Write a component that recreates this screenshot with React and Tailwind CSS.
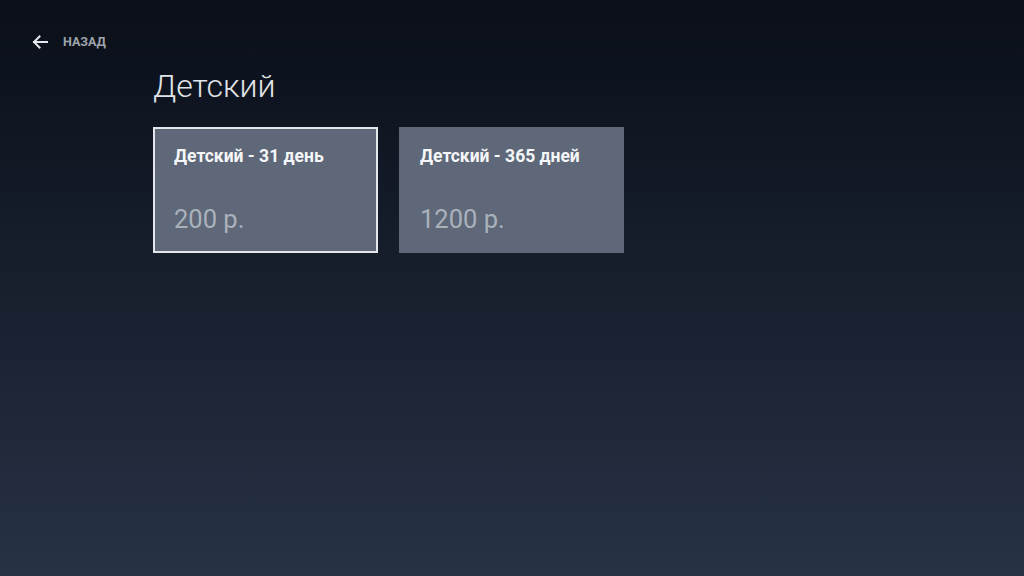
import React from "react";

const plans = [
  { id: 1, name: "Детский - 31 день", price: "200 р.", selected: true },
  { id: 2, name: "Детский - 365 дней", price: "1200 р.", selected: false },
];

const App = () => {
  return (
    <div
      className="min-h-[576px] w-full bg-gradient-to-b from-[#0a0f19] to-[#273245] pt-[35px]"
      style={{ fontFamily: "Roboto, 'Liberation Sans', sans-serif" }}
    >
      {/* Back */}
      <div className="flex items-center pl-[32px]">
        <svg width="16" height="14" viewBox="0 0 16 14" fill="none" stroke="#e4e7eb" strokeWidth="2" strokeLinecap="square">
          <path d="M2 7h13" />
          <path d="M7.5 1.5 2 7l5.5 5.5" />
        </svg>
        <span className="ml-[15px] text-[12.5px] font-bold leading-none text-[#9ea4ac]">НАЗАД</span>
      </div>

      <div className="ml-[153px]">
        {/* Title */}
        <h1 className="mt-[21px] text-[32px] font-light leading-none text-[#e0e3e7]">Детский</h1>

        {/* Plans */}
        <div className="mt-[25px] flex gap-[21px]">
          {plans.map((plan) => (
            <div
              key={plan.id}
              className={`h-[126px] w-[225px] border-2 bg-[#5e6878] px-[19px] pt-[19px] ${
                plan.selected ? "border-[#e3e7ec]" : "border-transparent"
              }`}
            >
              <div className="text-[17.5px] font-bold leading-none text-[#f5f6f8]">{plan.name}</div>
              <div className="mt-[41px] text-[25.5px] leading-none text-[#aab1bc]">{plan.price}</div>
            </div>
          ))}
        </div>
      </div>
    </div>
  );
};

export default App;
